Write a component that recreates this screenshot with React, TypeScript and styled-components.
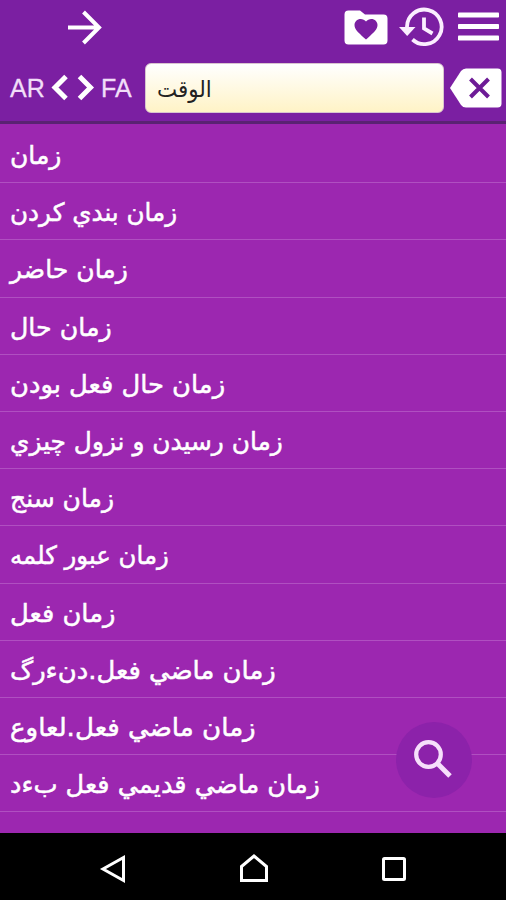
import React from "react";
import styled, { createGlobalStyle } from "styled-components";

const GlobalStyle = createGlobalStyle`
  html, body { margin: 0; padding: 0; background: #000; }
  * { box-sizing: border-box; }
`;

const Screen = styled.div`
  width: 506px;
  height: 900px;
  display: flex;
  flex-direction: column;
  overflow: hidden;
  position: relative;
  background: #9c27b0;
`;

const Header = styled.header`
  height: 124px;
  flex: none;
  display: flex;
  flex-direction: column;
  background: #7b1fa2;
  border-bottom: 3px solid #5a2272;
`;

const Toolbar = styled.div`
  height: 54px;
  display: flex;
  align-items: center;
  padding: 0 7px 0 64px;
`;

const Actions = styled.div`
  margin-left: auto;
  display: flex;
  align-items: center;
`;

const IconButton = styled.button<{ $w: number; $h: number; $gap?: number }>`
  appearance: none;
  border: 0;
  padding: 0;
  margin: 0 0 0 ${(p) => p.$gap ?? 0}px;
  background: none;
  width: ${(p) => p.$w}px;
  height: ${(p) => p.$h}px;
  flex: none;
  display: block;
  svg { display: block; width: 100%; height: 100%; }
`;

const SearchBar = styled.div`
  height: 67px;
  display: flex;
  align-items: center;
  padding-left: 10px;
`;

const Lang = styled.span<{ $w: number; $gap?: number }>`
  width: ${(p) => p.$w}px;
  margin-left: ${(p) => p.$gap ?? 0}px;
  flex: none;
  font: 25px/30px "Liberation Sans", Arial, sans-serif;
  color: #f1def8;
  -webkit-text-stroke: 0.3px #f1def8;
  white-space: nowrap;
`;

const Field = styled.div`
  width: 299px;
  height: 50px;
  margin-left: 9px;
  padding: 3px 11px 0;
  display: flex;
  align-items: center;
  border: 1px solid #d9c4cf;
  border-radius: 6px;
  background: linear-gradient(#ffffff, #fff3c6);
`;

const Query = styled.span<{ $stretch: number }>`
  font: 23px/30px "DejaVu Sans", sans-serif;
  color: #222;
  white-space: nowrap;
  transform-origin: left center;
  transform: scaleX(${(p) => p.$stretch});
`;

const List = styled.ul`
  flex: 1;
  min-height: 0;
  margin: 0;
  padding: 2px 0 0;
  list-style: none;
  overflow: hidden;
`;

const Row = styled.li`
  height: 57.2px;
  display: flex;
  align-items: center;
  padding: 4px 0 0 10px;
  border-bottom: 1.5px solid #b04fc1;
`;

const Word = styled.span<{ $stretch: number }>`
  font: 25px/30px "DejaVu Sans", sans-serif;
  color: #fff;
  -webkit-text-stroke: 0.5px #fff;
  white-space: nowrap;
  transform-origin: left center;
  transform: scaleX(${(p) => p.$stretch});
`;

const Fab = styled.button`
  position: absolute;
  left: 396px;
  top: 722px;
  width: 76px;
  height: 76px;
  border: 0;
  padding: 0;
  border-radius: 50%;
  background: #8c22aa;
  svg { display: block; width: 76px; height: 76px; }
`;

const NavBar = styled.nav`
  height: 67px;
  flex: none;
  display: flex;
  align-items: center;
  padding: 4px 97px 0 98px;
  justify-content: space-between;
  background: #000;
`;

const words: { text: string; stretch: number }[] = [
  { text: "زمان", stretch: 1 },
  { text: "زمان بندي كردن", stretch: 0.985 },
  { text: "زمان حاضر", stretch: 1.003 },
  { text: "زمان حال", stretch: 1.01 },
  { text: "زمان حال فعل بودن", stretch: 1.03 },
  { text: "زمان رسيدن و نزول چيزي", stretch: 0.993 },
  { text: "زمان سنج", stretch: 1 },
  { text: "زمان عبور كلمه", stretch: 0.975 },
  { text: "زمان فعل", stretch: 1.03 },
  { text: "زمان ماضي فعل.دنءرگ", stretch: 1.034 },
  { text: "زمان ماضي فعل.لعاوع", stretch: 1.043 },
  { text: "زمان ماضي قديمي فعل بءد", stretch: 1.023 },
];

export default function App() {
  return (
    <>
      <GlobalStyle />
      <Screen>
        <Header>
          <Toolbar>
            <IconButton $w={40} $h={40} aria-label="Forward">
              <svg viewBox="0 0 40 40" fill="none" stroke="#fff" strokeWidth="4">
                <path d="M4 20.500H35M19.500 5L35 20.500L19.500 36" />
              </svg>
            </IconButton>
            <Actions>
              <IconButton $w={44} $h={35} aria-label="Favorites">
                <svg viewBox="0 0 44 35">
                  <path fill="#fff" d="M4.500 .5H16L21 4.500H39.500Q43.500 4.500 43.500 8.500V30.500Q43.500 34.500 39.500 34.500H4.500Q.5 34.500 .5 30.500V4.500Q.5 .5 4.500 .5Z" />
                  <path fill="#7b1fa2" d="M22 29.500L20.200 28C14 22.400 10.500 19.300 10.500 15.100C10.500 11.700 13.200 9 16.700 9C18.700 9 20.700 10 22 11.400C23.300 10 25.300 9 27.300 9C30.800 9 33.500 11.700 33.500 15.100C33.500 19.300 30 22.400 23.800 28Z" />
                </svg>
              </IconButton>
              <IconButton $w={46} $h={40} $gap={11} aria-label="History">
                <svg viewBox="0 0 46 40" fill="none" stroke="#fbeeff" strokeWidth="3.800">
                  <path d="M8 21V20A17.300 17.300 0 1 1 13.500 32.500" />
                  <path d="M25 10.500V21.500L33.500 26.500" />
                  <path fill="#fbeeff" stroke="none" d="M0 20H16.500L8.200 29Z" />
                </svg>
              </IconButton>
              <IconButton $w={41} $h={30} $gap={13} aria-label="Menu">
                <svg viewBox="0 0 41 30" fill="#fff">
                  <rect y=".5" width="41" height="5" rx=".8" />
                  <rect y="12" width="41" height="5" rx=".8" />
                  <rect y="23.500" width="41" height="5" rx=".8" />
                </svg>
              </IconButton>
            </Actions>
          </Toolbar>
          <SearchBar>
            <Lang $w={35}>AR</Lang>
            <IconButton $w={44} $h={28} $gap={6} aria-label="Swap languages">
              <svg viewBox="0 0 44 28" fill="none" stroke="#fff" strokeWidth="5">
                <path d="M15 2.500L4 13.500L15 24.500M28.500 2.500L39.500 13.500L28.500 24.500" />
              </svg>
            </IconButton>
            <Lang $w={35} $gap={6}>FA</Lang>
            <Field>
              <Query $stretch={0.93} dir="rtl">الوقت</Query>
            </Field>
            <IconButton $w={52} $h={40} $gap={6} aria-label="Clear">
              <svg viewBox="0 0 52 40">
                <path fill="#fff" d="M0 20L11 3Q13 .5 16 .5H47.500Q51.500 .5 51.500 4.500V35.500Q51.500 39.500 47.500 39.500H16Q13 39.500 11 37Z" />
                <path stroke="#6d1b96" strokeWidth="4" d="M20.500 11L38.500 29M38.500 11L20.500 29" />
              </svg>
            </IconButton>
          </SearchBar>
        </Header>
        <List>
          {words.map((w) => (
            <Row key={w.text}>
              <Word $stretch={w.stretch} dir="rtl">{w.text}</Word>
            </Row>
          ))}
        </List>
        <NavBar>
          <IconButton $w={30} $h={30} aria-label="Back">
            <svg viewBox="0 0 30 30" fill="none" stroke="#fff" strokeWidth="3">
              <path d="M25.500 3.500V26.500L5 15Z" />
            </svg>
          </IconButton>
          <IconButton $w={30} $h={30} aria-label="Home">
            <svg viewBox="0 0 30 30" fill="none" stroke="#fff" strokeWidth="3">
              <path d="M2.500 12.500L15 2L27.500 12.500V26.500H2.500Z" />
            </svg>
          </IconButton>
          <IconButton $w={30} $h={30} aria-label="Recents">
            <svg viewBox="0 0 30 30" fill="none" stroke="#fff" strokeWidth="3">
              <rect x="4.500" y="4.500" width="21" height="21" rx="1" />
            </svg>
          </IconButton>
        </NavBar>
        <Fab aria-label="Search">
          <svg viewBox="0 0 76 76" fill="none" stroke="#f6dffb">
            <circle cx="32.500" cy="32.500" r="12.300" strokeWidth="4.200" />
            <path d="M41.500 41.500L54 54" strokeWidth="5" />
          </svg>
        </Fab>
      </Screen>
    </>
  );
}
